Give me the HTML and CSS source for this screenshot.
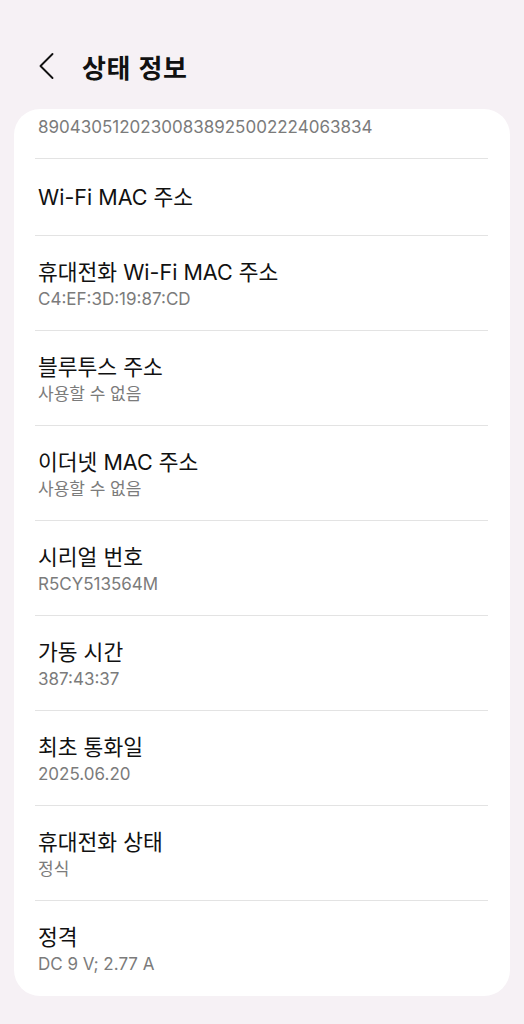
FILE: index.html
```html
<!DOCTYPE html>
<html lang="ko">
<head>
<meta charset="utf-8">
<link rel="stylesheet" href="styles.css">
</head>
<body>
<header class="header">
  <svg class="back" width="20" height="28" viewBox="0 0 20 28"><path d="M15.5 2 L3.5 14 L15.5 26" fill="none" stroke="#111" stroke-width="1.9" stroke-linecap="round" stroke-linejoin="round"/></svg>
  <h1 class="title">상태 정보</h1>
</header>
<main class="card">
  <div class="row first"><div class="sub">89043051202300838925002224063834</div></div>
  <div class="divider"></div>
  <div class="row single"><div class="name">Wi-Fi MAC 주소</div></div>
  <div class="divider"></div>
  <div class="row"><div class="name">휴대전화 Wi-Fi MAC 주소</div><div class="sub">C4:EF:3D:19:87:CD</div></div>
  <div class="divider"></div>
  <div class="row"><div class="name">블루투스 주소</div><div class="sub">사용할 수 없음</div></div>
  <div class="divider"></div>
  <div class="row"><div class="name">이더넷 MAC 주소</div><div class="sub">사용할 수 없음</div></div>
  <div class="divider"></div>
  <div class="row"><div class="name">시리얼 번호</div><div class="sub">R5CY513564M</div></div>
  <div class="divider"></div>
  <div class="row"><div class="name">가동 시간</div><div class="sub">387:43:37</div></div>
  <div class="divider"></div>
  <div class="row"><div class="name">최초 통화일</div><div class="sub">2025.06.20</div></div>
  <div class="divider"></div>
  <div class="row"><div class="name">휴대전화 상태</div><div class="sub">정식</div></div>
  <div class="divider"></div>
  <div class="row last"><div class="name">정격</div><div class="sub">DC 9 V; 2.77 A</div></div>
</main>
</body>
</html>
```

FILE: styles.css
```css
* { box-sizing: border-box; }
html, body { margin: 0; padding: 0; }
body {
  background: #f6f1f5;
  font-family: Inter, "Noto Sans CJK KR", sans-serif;
  color: #111;
  width: 524px;
  height: 1024px;
  overflow: hidden;
}
.header {
  display: flex;
  align-items: center;
  height: 109px;
  padding: 23px 0 0 37px;
}
.back { display: block; margin-right: 25px; }
.title {
  margin: 0;
  font-family: "Noto Sans CJK KR", sans-serif;
  font-size: 26px;
  font-weight: 700;
  letter-spacing: 0.5px;
}
.card {
  background: #fff;
  margin: 0 14px;
  border-radius: 26px;
}
.row {
  padding: 22px 24px 20px;
}
.row.single { padding: 24px 24px 24px; }
.row.first { padding: 7px 24px 20px; }
.row.last { padding: 22px 24px 21px; }
.name {
  font-size: 21.5px;
  line-height: 28px;
  color: #111;
}
.sub {
  margin-top: 2px;
  font-size: 17px;
  line-height: 22px;
  color: #7b7b7b;
}
.row.first .sub { margin-top: 0; }
.divider {
  height: 1px;
  background: #e3e3e3;
  margin: 0 22px 0 21px;
}
```
